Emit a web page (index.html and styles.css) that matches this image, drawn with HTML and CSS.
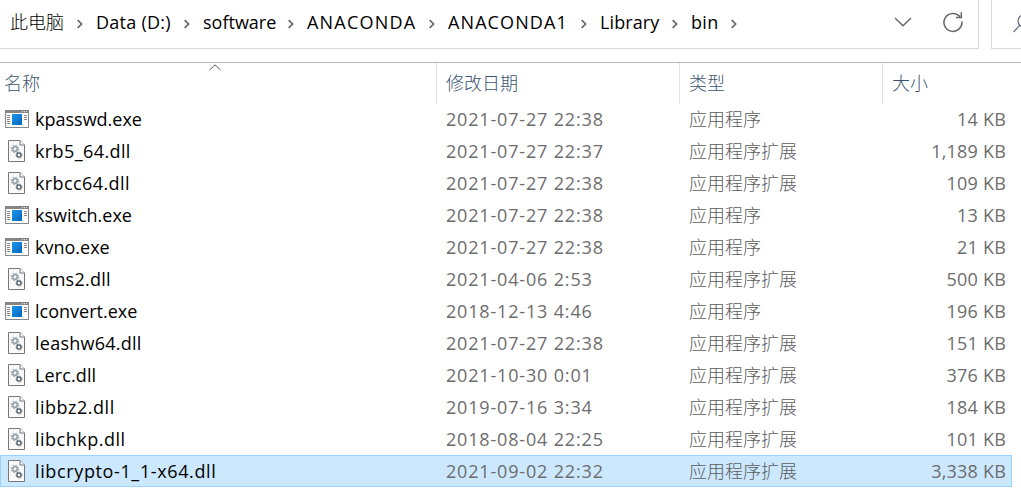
FILE: index.html
```html
<!DOCTYPE html>
<html lang="zh-CN">
<head>
<meta charset="utf-8">
<title>bin</title>
<link rel="stylesheet" href="styles.css">
</head>
<body>
<svg class="defs" width="0" height="0" aria-hidden="true">
  <defs>
    <linearGradient id="blue" x1="0" y1="0" x2="1" y2="1"><stop offset="0" stop-color="#2196e8"/><stop offset="1" stop-color="#0067c0"/></linearGradient>
    <symbol id="sep" viewBox="0 0 8 10"><path d="M1.700 1.200 5.600 5 1.700 8.800" fill="none" stroke="#666" stroke-width="1.700"/></symbol>
    <symbol id="exe" viewBox="0 0 24 18">
      <path d="M.5.5h23v17H.5z" fill="#fff" stroke="#858585"/>
      <path d="M0 0h24v3H0z" fill="#858585"/>
      <path d="M17 1.500h1m1 0h1m1 0h1" stroke="#ddd"/>
      <path d="M2 5.500h3m-3 2h3m-3 2h3m-3 2h3m-3 2h3M19 5.500h3m-3 2h3m-3 2h3" stroke="#8c8c8c"/>
      <path d="M7 4h10v11H7z" fill="url(#blue)"/>
    </symbol>
    <symbol id="dll" viewBox="0 0 17 22">
      <path d="M.5.5H12L16.500 5v16.500H.5z" fill="#fafafa" stroke="#777"/>
      <path d="M12 .5V5h4.500" fill="#fff" stroke="#777"/>
      <circle cx="7" cy="9" r="2.300" fill="none" stroke="#9aa4ad" stroke-width="1.700"/>
      <circle cx="7" cy="9" r="3.600" fill="none" stroke="#9aa4ad" stroke-width="1.300" stroke-dasharray="1.400 1.427"/>
      <circle cx="11" cy="15" r="2" fill="#fff" stroke="#65717c" stroke-width="1.600"/>
      <circle cx="11" cy="15" r="3" fill="none" stroke="#65717c" stroke-width="1" stroke-dasharray="1.200 1.156"/>
    </symbol>
  </defs>
</svg>
<header class="toolbar">
  <nav class="address">
    <span class="crumb c1">此电脑</span><svg class="sep"><use href="#sep"/></svg>
    <span class="crumb c2">Data (D:)</span><svg class="sep"><use href="#sep"/></svg>
    <span class="crumb c3">software</span><svg class="sep"><use href="#sep"/></svg>
    <span class="crumb c4">ANACONDA</span><svg class="sep"><use href="#sep"/></svg>
    <span class="crumb c5">ANACONDA1</span><svg class="sep"><use href="#sep"/></svg>
    <span class="crumb c6">Library</span><svg class="sep"><use href="#sep"/></svg>
    <span class="crumb c7">bin</span><svg class="sep"><use href="#sep"/></svg>
    <svg class="drop" viewBox="0 0 18 10"><path d="M1 1l8 7.700L17 1" fill="none" stroke="#666" stroke-width="1.400"/></svg>
    <svg class="refresh" viewBox="0 0 20 22"><path d="M18.900 10.500A9 9 0 1 1 17 5.800" fill="none" stroke="#666" stroke-width="1.500"/><path d="M18.300 1.300v5.200h-5.400" fill="none" stroke="#666" stroke-width="1.500"/></svg>
  </nav>
  <div class="search"><svg width="20" height="20" viewBox="0 0 20 20"><circle cx="11" cy="7" r="6" fill="none" stroke="#656b83" stroke-width="1.200"/><path d="M6.800 11.300.5 18" stroke="#656b83" stroke-width="1.200"/></svg></div>
</header>
<main class="files">
  <div class="head">
    <span>名称<svg class="sort" viewBox="0 0 12 7"><path d="M.5 6 6 .8 11.500 6" fill="none" stroke="#555"/></svg></span><span>修改日期</span><span>类型</span><span>大小</span>
  </div>
  <div class="row"><svg class="exe"><use href="#exe"/></svg><b>kpasswd.exe</b><time>2021-07-27 22:38</time><i>应用程序</i><em>14 KB</em></div>
  <div class="row"><svg class="dll"><use href="#dll"/></svg><b class="loose">krb5_64.dll</b><time>2021-07-27 22:37</time><i>应用程序扩展</i><em>1,189 KB</em></div>
  <div class="row"><svg class="dll"><use href="#dll"/></svg><b class="loose">krbcc64.dll</b><time>2021-07-27 22:38</time><i>应用程序扩展</i><em>109 KB</em></div>
  <div class="row"><svg class="exe"><use href="#exe"/></svg><b>kswitch.exe</b><time>2021-07-27 22:38</time><i>应用程序</i><em>13 KB</em></div>
  <div class="row"><svg class="exe"><use href="#exe"/></svg><b>kvno.exe</b><time>2021-07-27 22:38</time><i>应用程序</i><em>21 KB</em></div>
  <div class="row"><svg class="dll"><use href="#dll"/></svg><b class="mid">lcms2.dll</b><time>2021-04-06 2:53</time><i>应用程序扩展</i><em>500 KB</em></div>
  <div class="row"><svg class="exe"><use href="#exe"/></svg><b>lconvert.exe</b><time>2018-12-13 4:46</time><i>应用程序</i><em>196 KB</em></div>
  <div class="row"><svg class="dll"><use href="#dll"/></svg><b class="mid">leashw64.dll</b><time>2021-07-27 22:38</time><i>应用程序扩展</i><em>151 KB</em></div>
  <div class="row"><svg class="dll"><use href="#dll"/></svg><b class="tight">Lerc.dll</b><time>2021-10-30 0:01</time><i>应用程序扩展</i><em>376 KB</em></div>
  <div class="row"><svg class="dll"><use href="#dll"/></svg><b class="wide">libbz2.dll</b><time>2019-07-16 3:34</time><i>应用程序扩展</i><em>184 KB</em></div>
  <div class="row"><svg class="dll"><use href="#dll"/></svg><b class="wide">libchkp.dll</b><time>2018-08-04 22:25</time><i>应用程序扩展</i><em>101 KB</em></div>
  <div class="row selected"><svg class="dll"><use href="#dll"/></svg><b class="widest">libcrypto-1_1-x64.dll</b><time>2021-09-02 22:32</time><i>应用程序扩展</i><em>3,338 KB</em></div>
</main>
</body>
</html>
```
FILE: styles.css
```css
* { box-sizing: border-box; }
body {
  margin: 0;
  width: 1021px;
  height: 489px;
  overflow: hidden;
  background: #fff;
  color: #000;
  font: 18px/32px "Open Sans", "Noto Sans CJK SC", sans-serif;
}
svg { display: block; flex: none; }
.defs { position: absolute; }
.toolbar { display: flex; height: 49px; gap: 12px; }
.address {
  display: flex;
  align-items: center;
  width: 979px;
  padding: 0 15px 4px 10px;
  border: solid #d9d9d9;
  border-width: 0 1px 1px 0;
}
.crumb { white-space: nowrap; flex: none; }
.c1 { width: 66px; font-weight: 300; }
.c2 { width: 87px; letter-spacing: .25px; }
.c3 { width: 84px; }
.c4 { width: 121px; letter-spacing: 1.2px; }
.c5 { width: 132px; letter-spacing: 1.1px; }
.c6 { width: 71px; letter-spacing: .1px; }
.c7 { width: 39px; letter-spacing: .3px; }
.sep { width: 8px; height: 10px; margin: 3px 12px 0 0; }
.drop { width: 18px; height: 10px; margin-left: auto; }
.refresh { width: 20px; height: 22px; margin: 0 0 1px 31px; }
.search {
  flex: 1;
  overflow: hidden;
  padding: 14px 0 0 21px;
  border: solid #d9d9d9;
  border-width: 0 0 1px 1px;
}
.files { margin-top: 13px; border-top: 1px solid #b9b9b9; }
.head {
  display: grid;
  grid-template-columns: 437px 243px 203px 1fr;
  height: 40px;
  color: #3d5574;
  font-weight: 300;
  line-height: 41px;
}
.head span { position: relative; padding-left: 9px; border-right: 1px solid #e2e2e2; }
.head span:first-child { padding-left: 4px; }
.head span:last-child { border: 0; }
.sort { position: absolute; left: 209px; top: 1px; width: 12px; height: 7px; }
.row {
  display: grid;
  grid-template-columns: 35px 411px 243px 160px 157px;
  align-items: center;
  height: 32px;
  color: #6d6d6d;
}
.row b, .row em { font-weight: 400; font-style: normal; }
.row i { color: #5c5c5c; font-weight: 300; font-style: normal; }
.row b { color: #000; }
.row time { letter-spacing: .83px; }
.row em { text-align: right; letter-spacing: .2px; }
.row .tight { letter-spacing: .12px; }
.row .mid { letter-spacing: .25px; }
.row .loose { letter-spacing: .4px; }
.row .wide { letter-spacing: .5px; }
.row .widest { letter-spacing: .63px; }
.exe { width: 24px; height: 18px; margin-left: 5px; }
.dll { width: 17px; height: 22px; margin-left: 8px; }
.selected {
  width: 1012px;
  background: #cce8ff;
  box-shadow: inset 0 0 0 1px #99d1ff;
}
```
